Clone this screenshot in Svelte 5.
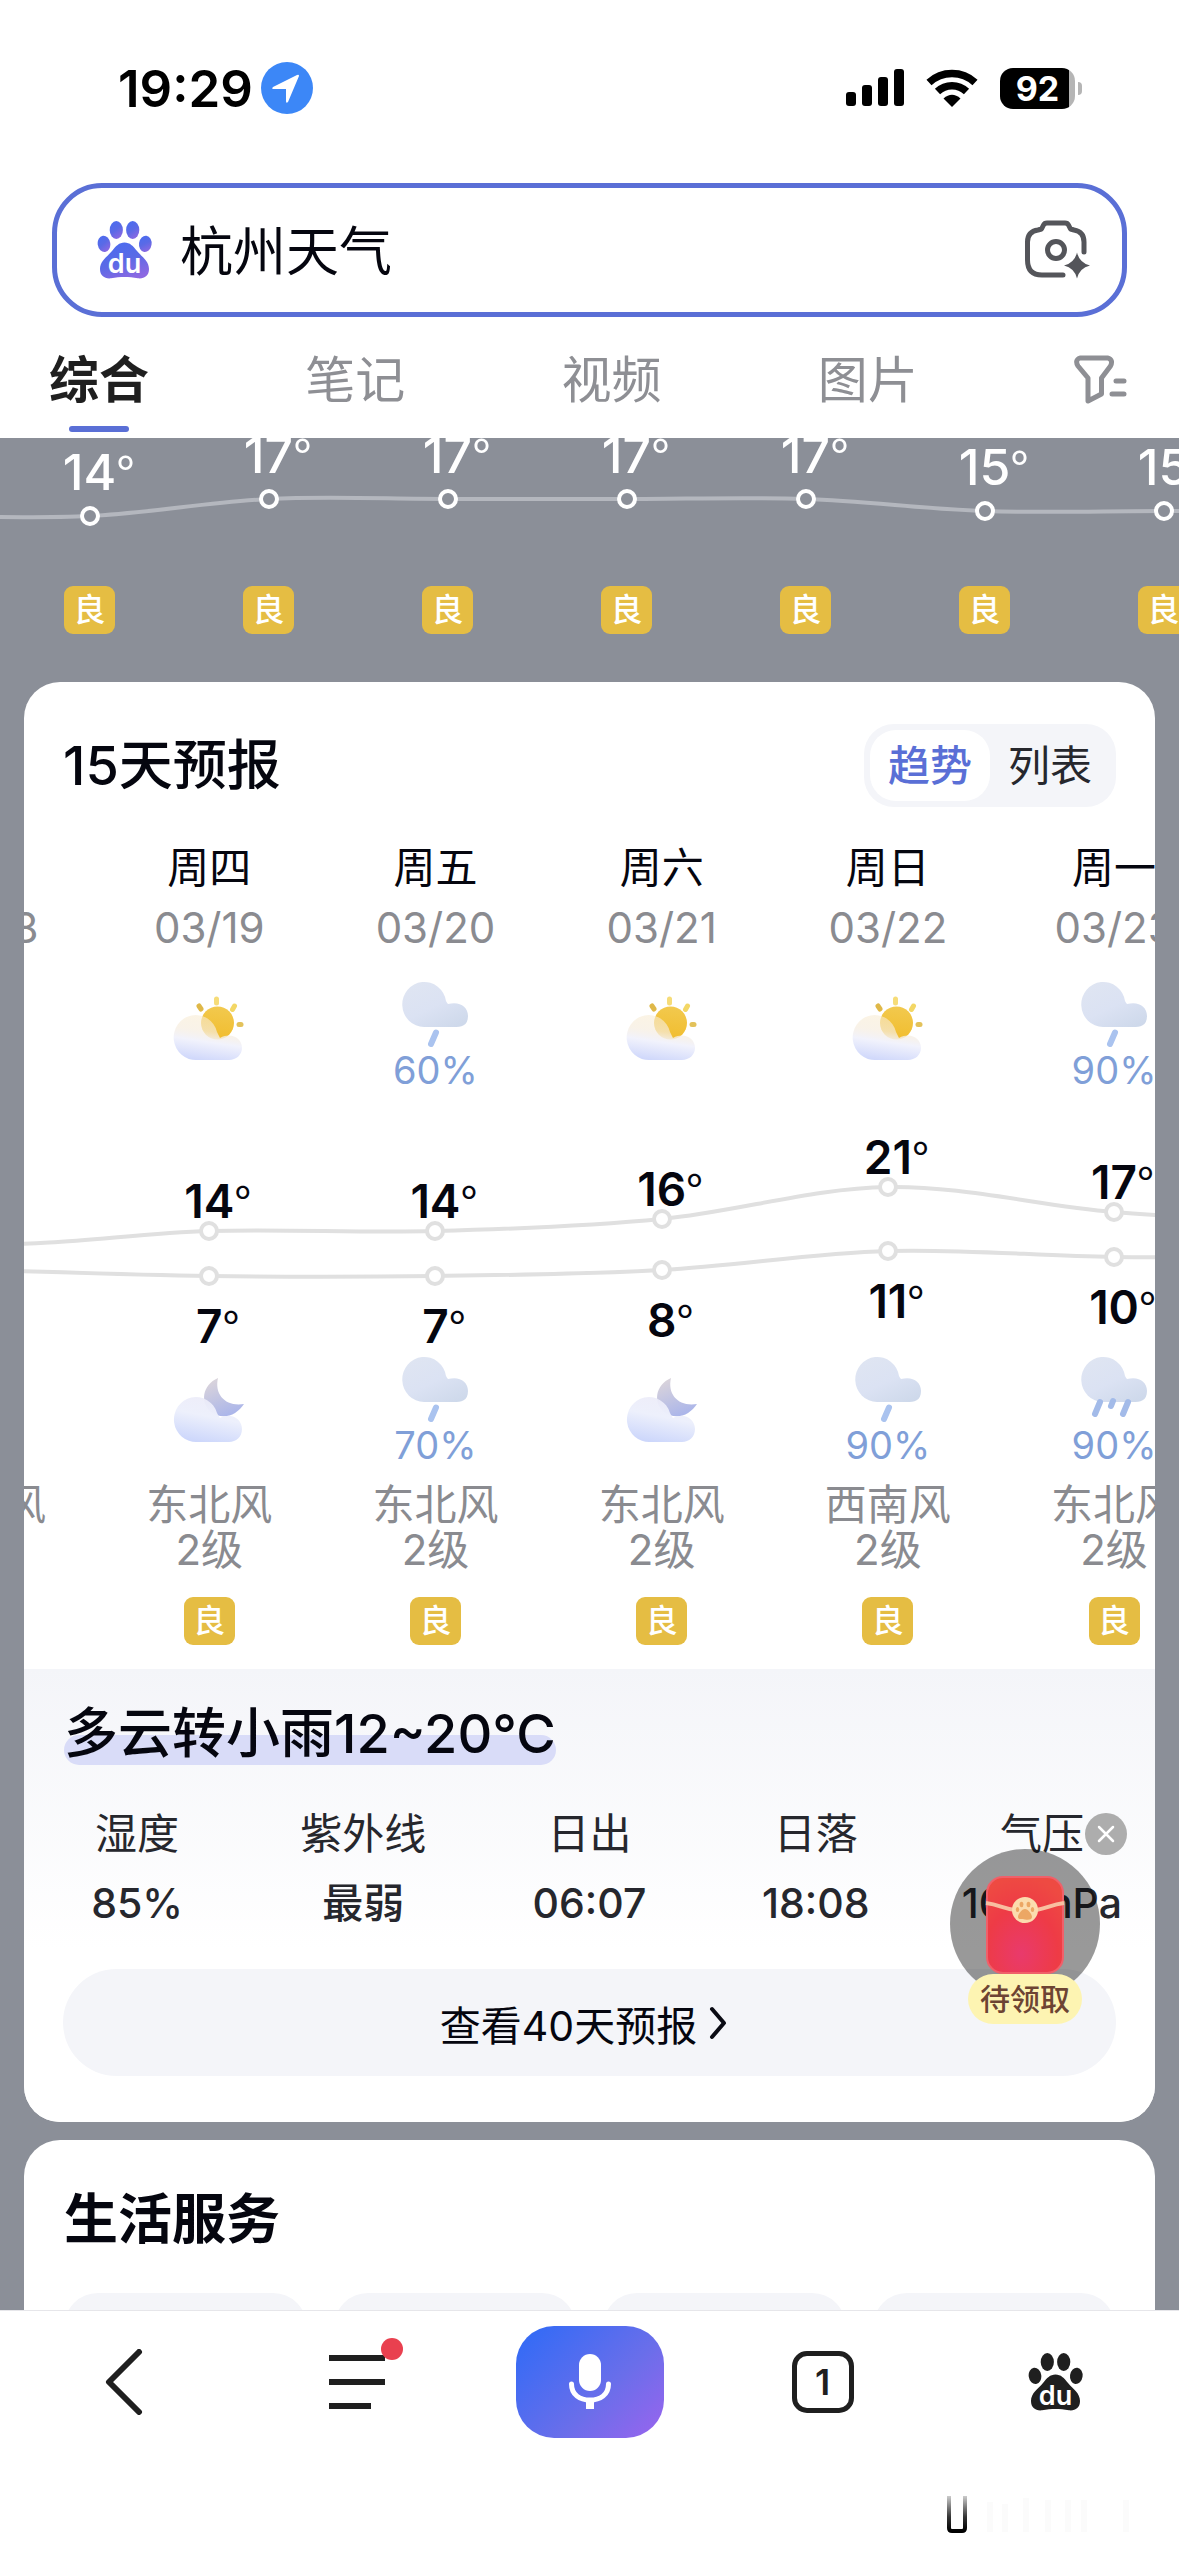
<script lang="ts">
  interface Weather {
    icon: 'cloudy' | 'night' | 'rain' | 'shower';
    chance?: number;
  }

  interface Day {
    week: string;
    date: string;
    day: Weather;
    night: Weather;
    high: number;
    low: number;
    wind: string;
    level: string;
    air: string;
  }

  const tabs = ['综合', '笔记', '视频', '图片'];
  let activeTab = $state('综合');
  let keyword = $state('杭州天气');
  let view = $state('趋势');
  let showGift = $state(true);

  const hours = [14, 17, 17, 17, 17, 15, 15];

  const days: Day[] = [
    { week: '周三', date: '03/18', day: { icon: 'cloudy' }, night: { icon: 'night' }, high: 12, low: 8, wind: '东北风', level: '2级', air: '良' },
    { week: '周四', date: '03/19', day: { icon: 'cloudy' }, night: { icon: 'night' }, high: 14, low: 7, wind: '东北风', level: '2级', air: '良' },
    { week: '周五', date: '03/20', day: { icon: 'rain', chance: 60 }, night: { icon: 'rain', chance: 70 }, high: 14, low: 7, wind: '东北风', level: '2级', air: '良' },
    { week: '周六', date: '03/21', day: { icon: 'cloudy' }, night: { icon: 'night' }, high: 16, low: 8, wind: '东北风', level: '2级', air: '良' },
    { week: '周日', date: '03/22', day: { icon: 'cloudy' }, night: { icon: 'rain', chance: 90 }, high: 21, low: 11, wind: '西南风', level: '2级', air: '良' },
    { week: '周一', date: '03/23', day: { icon: 'rain', chance: 90 }, night: { icon: 'shower', chance: 90 }, high: 17, low: 10, wind: '东北风', level: '2级', air: '良' }
  ];

  const stats = [
    { label: '湿度', value: '85%' },
    { label: '紫外线', value: '最弱' },
    { label: '日出', value: '06:07' },
    { label: '日落', value: '18:08' },
    { label: '气压', value: '1013hPa' }
  ];

  const hourY = (t: number) => Math.round(198 - t * 5.7);
  const dayY = (t: number) => Math.round(228.5 - t * 6.36);

  // Smooth curve through column centres; the first and last values sit outside the strip
  function curve(values: number[], toY: (t: number) => number): string {
    const pts = values.map((v, i) => [i * 100 - 50, toY(v)]);
    let d = `M${pts[0][0]} ${pts[0][1]}`;
    for (let i = 0; i < pts.length - 1; i++) {
      const p0 = pts[i - 1] ?? pts[i];
      const p1 = pts[i];
      const p2 = pts[i + 1];
      const p3 = pts[i + 2] ?? p2;
      d += ` C${p1[0] + (p2[0] - p0[0]) / 6} ${p1[1] + (p2[1] - p0[1]) / 6}`;
      d += ` ${p2[0] - (p3[0] - p1[0]) / 6} ${p2[1] - (p3[1] - p1[1]) / 6} ${p2[0]} ${p2[1]}`;
    }
    return d;
  }

  const hourLine = curve([14, ...hours, 15], hourY);
  const highLine = curve([16, ...days.map((d) => d.high), 15], dayY);
  const lowLine = curve([9, ...days.map((d) => d.low), 10], dayY);
</script>

{#snippet paw(fill: string, ink: string)}
  <svg viewBox="17 21 56 60" width="56" height="60" aria-hidden="true">
    <g {fill}>
      <ellipse cx="36.3" cy="31" rx="6.6" ry="8.9" />
      <ellipse cx="52.7" cy="31" rx="6.6" ry="8.9" />
      <ellipse cx="24" cy="44.8" rx="6.3" ry="8.2" transform="rotate(-8 24 44.8)" />
      <ellipse cx="65.3" cy="44.8" rx="6.3" ry="8.2" transform="rotate(8 65.3 44.8)" />
      <path d="M44.5 43.5C50 43.5 53 47 57 52C62 58 69 62 69 70C69 77 64 80 58 79.3C53 78.5 49 78 44.5 78C40 78 36 78.5 31 79.3C25 80 20 77 20 70C20 62 27 58 32 52C36 47 39 43.5 44.5 43.5Z" />
    </g>
    <text x="44.5" y="74" text-anchor="middle" font-size="27" font-weight="600" fill={ink}>du</text>
  </svg>
{/snippet}

{#snippet weather(w: Weather)}
  <div class="weather">
    {#if w.icon === 'cloudy'}
      <svg width="72" height="80" viewBox="0 0 72 80" aria-hidden="true">
        <g stroke="#f3d765" stroke-width="5" stroke-linecap="round">
          <path d="M43.5 17v4" stroke="#f6dc78" />
          <path d="M26 24l2 3" stroke="#dfb848" />
          <path d="M61.5 24l-2 3.5" />
          <path d="M66 42.5h2" stroke="#e3c25a" />
        </g>
        <circle cx="44.5" cy="41" r="16.500" fill="url(#sun)" />
        <path d="M24 78A22 22.500 0 1 1 44 50Q46 54 47 56C58 50 69 56 69 66C69 73 63 78 56 78Z" fill="url(#puff)" />
      </svg>
    {:else if w.icon === 'night'}
      <svg width="72" height="86" viewBox="0 0 72 86" aria-hidden="true">
        <path d="M45 21C29 28 27 46 38 55C50 64 64 58 71 47C53 50 41 38 45 21Z" fill="url(#moon)" />
        <path d="M24 85A22 22.500 0 1 1 44 56Q46 60 47 61C58 55 69 62 69 72C69 80 63 85 56 85Z" fill="url(#haze)" />
      </svg>
    {:else}
      <svg width="72" height="66" viewBox="0 0 72 66" aria-hidden="true">
        <path d="M25 45a22 22.500 0 1 1 22-26q1 2 2 3c11-3 20 2 20 12s-7 11-14 11z" fill="url(#rain)" />
        {#if w.icon === 'rain'}
          <path d="M37 50.500l-5 11.500" stroke="#aac3ef" stroke-width="6" stroke-linecap="round" />
        {:else}
          <path d="M22 45l-5 12M35 44l-2 5M50 45l-5 12" stroke="#a3bbe9" stroke-width="6" stroke-linecap="round" />
        {/if}
      </svg>
      <span class="chance">{w.chance}%</span>
    {/if}
  </div>
{/snippet}

<svg class="defs" width="0" height="0" aria-hidden="true">
  <defs>
    <linearGradient id="sun" x1="0.6" y1="0" x2="0.5" y2="1">
      <stop offset="0" stop-color="#f2c94e" />
      <stop offset="1" stop-color="#f1bd2e" />
    </linearGradient>
    <linearGradient id="puff" x1="0.6" y1="0.1" x2="0.4" y2="1">
      <stop offset="0" stop-color="#f8ecd4" stop-opacity="0.6" />
      <stop offset="0.3" stop-color="#f6eddf" stop-opacity="0.7" />
      <stop offset="0.55" stop-color="#f1f2fc" stop-opacity="0.97" />
      <stop offset="1" stop-color="#d0d8fb" />
    </linearGradient>
    <linearGradient id="haze" x1="0.7" y1="0" x2="0.4" y2="1">
      <stop offset="0" stop-color="#ecebf8" stop-opacity="0.9" />
      <stop offset="0.45" stop-color="#edf0fc" />
      <stop offset="1" stop-color="#cdd7fb" />
    </linearGradient>
    <linearGradient id="moon" x1="0.2" y1="0" x2="0.6" y2="1">
      <stop offset="0" stop-color="#dcd5da" />
      <stop offset="1" stop-color="#aab5ea" />
    </linearGradient>
    <linearGradient id="rain" x1="0.2" y1="0" x2="0.9" y2="1">
      <stop offset="0" stop-color="#dfe5f2" />
      <stop offset="0.5" stop-color="#dbe2f3" />
      <stop offset="1" stop-color="#cdd8ea" />
    </linearGradient>
    <linearGradient id="brand" x1="0.2" y1="0" x2="0.7" y2="1">
      <stop offset="0" stop-color="#4a6cf0" />
      <stop offset="0.5" stop-color="#5a6ae6" />
      <stop offset="1" stop-color="#8d68e2" />
    </linearGradient>
    <radialGradient id="packet" cx="0.45" cy="0.8" r="0.8">
      <stop offset="0" stop-color="#e93a6c" />
      <stop offset="0.6" stop-color="#ee3b46" />
      <stop offset="1" stop-color="#ee4a42" />
    </radialGradient>
    <linearGradient id="home" x1="0" y1="0" x2="0" y2="1">
      <stop offset="0" stop-color="#000" stop-opacity="0.2" />
      <stop offset="0.6" stop-color="#000" stop-opacity="0.8" />
      <stop offset="1" stop-color="#000" />
    </linearGradient>
  </defs>
</svg>

<div class="page">
  <header>
    <div class="status">
      <span class="time">19:29</span>
      <svg width="52" height="52" viewBox="0 0 52 52" aria-hidden="true">
        <circle cx="26" cy="26" r="26" fill="#3c87f7" />
        <path d="M38 14L27 40Q25 42 25 39V27H13Q10 27 12 25L36 13Q38 12 38 14Z" fill="#fff" />
      </svg>
      <div class="signals">
        <svg width="58" height="38" viewBox="0 0 58 38" aria-hidden="true">
          <rect x="0" y="23" width="10" height="14" rx="3" />
          <rect x="16" y="16" width="10" height="21" rx="3" />
          <rect x="32" y="8" width="10" height="29" rx="3" />
          <rect x="48" y="0" width="10" height="37" rx="3" />
        </svg>
        <svg width="52" height="38" viewBox="0 0 52 38" aria-hidden="true">
          <g fill="none" stroke="#000" stroke-width="7.5">
            <path d="M3 13.5A34 34 0 0 1 49 13.5" />
            <path d="M11.5 22.5A21 21 0 0 1 40.5 22.5" />
          </g>
          <path d="M26 38L17.5 29.500Q26 22 34.5 29.500Z" />
        </svg>
        <div class="battery"><span>92</span></div>
      </div>
    </div>

    <form class="search" onsubmit={(e) => e.preventDefault()}>
      {@render paw('url(#brand)', '#fff')}
      <input type="text" aria-label="搜索" bind:value={keyword} />
      <button type="button" class="plain" aria-label="拍照搜索">
        <svg width="66" height="60" viewBox="14 22 66 60" aria-hidden="true">
          <path d="M73 54V44C73 37 69 33 63 32L59.5 31L57.5 27Q56.5 25 54 25H36Q33.5 25 32.5 27L30.5 31L27 32C20 33 16.5 37 16.5 44V62C16.5 72 21 77 31 77H52" fill="none" stroke="#54555a" stroke-width="5" stroke-linecap="round" stroke-linejoin="round" />
          <circle cx="45" cy="52" r="8.5" fill="none" stroke="#54555a" stroke-width="5" />
          <path d="M66 54.5Q68.5 65 79 67.5Q68.5 70 66 80.5Q63.5 70 53 67.5Q63.5 65 66 54.5Z" fill="#54555a" />
        </svg>
      </button>
    </form>

    <nav class="tabs">
      {#each tabs as tab}
        <button type="button" class="plain" class:active={tab === activeTab} onclick={() => (activeTab = tab)}>
          {tab}
        </button>
      {/each}
      <button type="button" class="plain" aria-label="筛选">
        <svg width="53" height="60" viewBox="65 150 53 60" fill="none" stroke="#8e8f94" stroke-width="5" stroke-linecap="round" stroke-linejoin="round" aria-hidden="true">
          <path d="M71 158H99Q104.5 160 101.5 166L92.5 178V194L79 201V178L69 166Q65.5 160 71 158Z" />
          <path d="M107 181h8M103 194h12" />
        </svg>
      </button>
    </nav>
  </header>

  <main>
    <section class="hours">
      <svg class="line" viewBox="0 0 700 188" preserveAspectRatio="none" aria-hidden="true">
        <path d={hourLine} stroke="#b4b7be" />
      </svg>
      {#each hours as temp}
        <div class="hour">
          <div class="plot">
            <span class="temp" style:top="{hourY(temp) - 69}px">{temp}<i>°</i></span>
            <span class="dot" style:top="{hourY(temp) - 10}px"></span>
          </div>
          <span class="air">良</span>
        </div>
      {/each}
    </section>

    <section class="card forecast">
      <div class="head">
        <h2>15天预报</h2>
        <div class="toggle">
          {#each ['趋势', '列表'] as name}
            <button type="button" class="plain" class:active={name === view} onclick={() => (view = name)}>{name}</button>
          {/each}
        </div>
      </div>

      <div class="days">
        {#each days as d}
          <div class="day">
            <span class="week">{d.week}</span>
            <span class="date">{d.date}</span>
            {@render weather(d.day)}
            <div class="plot">
              <span class="temp" style:top="{dayY(d.high) - 55}px">{d.high}<i>°</i></span>
              <span class="dot" style:top="{dayY(d.high) - 10}px"></span>
              <span class="dot" style:top="{dayY(d.low) - 10}px"></span>
              <span class="temp" style:top="{dayY(d.low) + 25}px">{d.low}<i>°</i></span>
            </div>
            {@render weather(d.night)}
            <span class="wind">{d.wind}<br />{d.level}</span>
            <span class="air">{d.air}</span>
          </div>
        {/each}
        <svg class="line" viewBox="0 0 600 265" preserveAspectRatio="none" aria-hidden="true">
          <path d={highLine} stroke="#e0e0e0" />
          <path d={lowLine} stroke="#e0e0e0" />
        </svg>
      </div>

      <div class="detail">
        <h3><span>多云转小雨12~20℃</span></h3>
        <dl>
          {#each stats as s}
            <div>
              <dt>{s.label}</dt>
              <dd>{s.value}</dd>
            </div>
          {/each}
        </dl>
        <a class="more" href="#forecast40">
          查看40天预报
          <svg width="18" height="34" viewBox="0 0 18 34" aria-hidden="true">
            <path d="M3 3L15 17L3 31" fill="none" stroke="#0a0b14" stroke-width="4" stroke-linecap="round" stroke-linejoin="round" />
          </svg>
        </a>
        {#if showGift}
          <div class="gift">
            <button type="button" class="plain" aria-label="关闭" onclick={() => (showGift = false)}>
              <svg width="42" height="42" viewBox="0 0 42 42" aria-hidden="true">
                <circle cx="21" cy="21" r="21" fill="#adadad" />
                <path d="M14 14l14 14M28 14L14 28" stroke="#fff" stroke-width="2.5" stroke-linecap="round" />
              </svg>
            </button>
            <a class="packet" href="#gift">
              <svg width="150" height="150" viewBox="0 0 150 150" aria-hidden="true">
                <circle cx="75" cy="75" r="75" fill="#000" opacity="0.4" />
                <rect x="37" y="28" width="76" height="96" rx="16" fill="url(#packet)" stroke="#f0606a" stroke-width="2" />
                <path d="M36 54C52 56 56 62 75 62C94 62 98 56 114 54" fill="none" stroke="#f8bfa0" stroke-width="4" />
                <circle cx="75" cy="61" r="13" fill="#fbdcae" />
                <g fill="#eca764">
                  <ellipse cx="71.5" cy="55.5" rx="1.9" ry="2.8" />
                  <ellipse cx="78.5" cy="55.5" rx="1.9" ry="2.8" />
                  <ellipse cx="67.5" cy="60.5" rx="1.7" ry="2.5" />
                  <ellipse cx="82.5" cy="60.5" rx="1.7" ry="2.5" />
                  <path d="M75 60c3 0 7 5 7 8s-4 3-7 2.500s-7 0.500-7-2.500s4-8 7-8z" />
                </g>
              </svg>
              <span>待领取</span>
            </a>
          </div>
        {/if}
      </div>
    </section>

    <section class="card life">
      <h2>生活服务</h2>
      <div class="tiles">
        {#each [1, 2, 3, 4] as tile (tile)}
          <div class="tile"></div>
        {/each}
      </div>
    </section>
  </main>

  <footer>
    <button type="button" class="plain" aria-label="返回">
      <svg width="38" height="66" viewBox="0 0 38 66" aria-hidden="true">
        <path d="M34 3L4 33L34 63" fill="none" stroke="#1f1f1f" stroke-width="6" stroke-linecap="round" stroke-linejoin="round" />
      </svg>
    </button>
    <button type="button" class="plain menu" aria-label="菜单">
      <svg width="56" height="56" viewBox="0 0 56 56" aria-hidden="true">
        <path d="M0 4H56M0 28H56M0 52H42" stroke="#1f1f1f" stroke-width="6" />
      </svg>
      <span class="badge"></span>
    </button>
    <button type="button" class="plain mic" aria-label="语音">
      <svg width="44" height="56" viewBox="0 0 44 56" aria-hidden="true">
        <rect x="11" y="0" width="22" height="37" rx="11" fill="#fff" />
        <path d="M3.5 30C3.5 41 12 46 22 46S40.5 41 40.5 30" fill="none" stroke="#fff" stroke-width="5" stroke-linecap="round" />
        <path d="M22 46v9" stroke="#fff" stroke-width="8" />
      </svg>
    </button>
    <button type="button" class="plain" aria-label="窗口">
      <span class="windows">1</span>
    </button>
    <button type="button" class="plain" aria-label="首页">
      {@render paw('#1f1f1f', '#fff')}
    </button>
    <svg class="mark" width="280" height="40" viewBox="0 0 280 40" aria-hidden="true">
      <path d="M79 0V32Q79 35 82 35H92Q95 35 95 32V0" fill="none" stroke="url(#home)" stroke-width="4" />
      <path d="M120 6v30M135 8v28M156 2v34M178 4v32M198 4v32M214 4v32M256 4v32" stroke="#fbfbfb" stroke-width="6" />
    </svg>
  </footer>
</div>

<style>
  :global(body) {
    margin: 0;
    background: #fff;
  }

  .page {
    display: flex;
    flex-direction: column;
    height: 100vh;
    overflow: hidden;
    font-family: Inter, 'Noto Sans CJK SC', sans-serif;
    color: #05060f;
  }

  .defs {
    position: absolute;
  }

  svg {
    display: block;
    flex: none;
  }

  .plain {
    padding: 0;
    border: 0;
    background: none;
    font: inherit;
    color: inherit;
  }

  h2,
  h3,
  dl,
  dd {
    margin: 0;
  }

  /* status bar */
  .status {
    display: flex;
    align-items: center;
    gap: 8px;
    height: 56px;
    padding: 60px 97px 67px 118px;
  }

  .time {
    font-size: 51px;
    font-weight: 600;
    color: #000;
  }

  .signals {
    display: flex;
    align-items: center;
    gap: 22px;
    margin-left: auto;
  }

  .battery {
    position: relative;
    width: 75px;
    height: 41px;
    margin-right: 7px;
    border-radius: 13px;
    background: linear-gradient(to right, #000 92%, #b5b5b5 92%);
    color: #fff;
    font-size: 34px;
    font-weight: 700;
    line-height: 41px;
    text-align: center;
  }

  .battery::after {
    content: '';
    position: absolute;
    top: 14px;
    right: -7px;
    width: 4px;
    height: 13px;
    border-radius: 0 6px 6px 0;
    background: #b5b5b5;
  }

  /* search box */
  .search {
    display: flex;
    align-items: center;
    height: 124px;
    margin: 0 52px;
    padding: 0 31px 0 40px;
    border: 5px solid #5a6fd6;
    border-radius: 50px;
  }

  .search input {
    flex: 1;
    min-width: 0;
    margin: 0 27px;
    padding: 0 0 4px;
    border: 0;
    outline: 0;
    background: none;
    font: inherit;
    font-size: 53px;
    color: inherit;
  }

  /* tabs */
  .tabs {
    display: flex;
    justify-content: space-between;
    align-items: flex-start;
    padding: 33px 45px 6px 49px;
    color: #8e8f94;
    font-size: 50px;
    line-height: 60px;
  }

  .tabs .plain::after {
    content: '';
    display: block;
    width: 60px;
    height: 6px;
    margin: 16px auto 0;
    border-radius: 3px;
  }

  .tabs .active {
    color: #1f1f1f;
    font-weight: 700;
  }

  .tabs .active::after {
    background: #5a6fd6;
  }

  main {
    position: relative;
    flex: 1;
    min-height: 0;
    overflow: hidden;
    background: #8b8f98;
  }

  /* shared chart parts */
  .line {
    position: absolute;
    left: 0;
    width: 100%;
    fill: none;
  }

  .line path {
    stroke-width: 4px;
    vector-effect: non-scaling-stroke;
  }

  .plot {
    position: relative;
    z-index: 1;
    display: flex;
    justify-content: center;
    width: 100%;
  }

  .temp {
    position: absolute;
    line-height: 50px;
  }

  .temp i {
    position: absolute;
    left: 100%;
    font-family: 'Noto Sans CJK SC', sans-serif;
    font-style: normal;
    font-weight: 400;
  }

  .dot {
    position: absolute;
    box-sizing: border-box;
    width: 20px;
    height: 20px;
    border: 4px solid #e0e0e0;
    border-radius: 50%;
    background: #fff;
  }

  .air {
    width: 51px;
    height: 48px;
    border-radius: 9px;
    background: #e5bd43;
    color: #fff;
    font-size: 32px;
    font-weight: 500;
    line-height: 48px;
    text-align: center;
  }

  /* hourly strip, scrolled partly under the tabs */
  .hours {
    position: relative;
    display: flex;
    width: 1253px;
    margin-top: -40px;
    padding-bottom: 48px;
  }

  .hours .line {
    top: 0;
    height: 188px;
  }

  .hour {
    flex: 1;
    display: flex;
    flex-direction: column;
    align-items: center;
  }

  .hour .plot {
    height: 188px;
    color: #fff;
    font-size: 50px;
    font-weight: 500;
  }

  .hour .dot {
    border-color: #fff;
    background: #8b8f98;
  }

  .card {
    margin: 0 24px 18px;
    border-radius: 36px;
    background: #fff;
    overflow: hidden;
  }

  .card h2,
  .card h3 {
    font-size: 54px;
    font-weight: 500;
    line-height: 64px;
  }

  .head {
    display: flex;
    align-items: center;
    justify-content: space-between;
    padding: 42px 39px 36px;
  }

  .toggle {
    display: flex;
    padding: 6px;
    border-radius: 30px;
    background: #f4f5f9;
    color: #26272d;
    font-size: 42px;
    line-height: 71px;
  }

  .toggle .plain {
    width: 120px;
    border-radius: 26px;
  }

  .toggle .active {
    background: #fff;
    color: #5a6fd6;
    font-weight: 500;
  }

  /* daily trend, swiped by about two thirds of a column */
  .days {
    position: relative;
    display: grid;
    grid-template-columns: repeat(6, 20%);
    margin-left: -154px;
    margin-right: 154px;
    padding-bottom: 24px;
  }

  .days .line {
    top: 249px;
    width: 120%;
    height: 265px;
  }

  .day {
    display: flex;
    flex-direction: column;
    align-items: center;
    font-size: 42px;
    line-height: 50px;
    white-space: nowrap;
  }

  .date {
    margin: 10px 0 29px;
    color: #8a8b90;
  }

  .weather {
    height: 110px;
    display: flex;
    flex-direction: column;
    align-items: center;
  }

  .chance {
    color: #809fd8;
    font-size: 38px;
    line-height: 44px;
  }

  .day .plot {
    height: 265px;
    font-size: 46px;
    font-weight: 600;
  }

  .wind {
    margin: 15px 0 25px;
    color: #8a8b90;
    line-height: 45px;
    text-align: center;
  }

  /* selected day */
  .detail {
    position: relative;
    padding: 33px 0 46px;
    background: linear-gradient(#f4f5f9, #fff 280px);
  }

  .detail h3 {
    padding: 0 40px;
  }

  .detail h3 span {
    position: relative;
    z-index: 0;
    display: inline-block;
  }

  .detail h3 span::before {
    content: '';
    position: absolute;
    z-index: -1;
    inset: 33px 0 1px;
    border-radius: 15px;
    background: #d9dcf8;
  }

  dl {
    display: grid;
    grid-template-columns: repeat(5, 1fr);
    margin-top: 43px;
    color: #26272d;
    font-size: 42px;
    line-height: 50px;
    text-align: center;
  }

  dd {
    margin-top: 19px;
    font-size: 41px;
    font-weight: 500;
  }

  .more {
    display: flex;
    align-items: center;
    justify-content: center;
    gap: 12px;
    height: 107px;
    margin: 41px 39px 0;
    padding-right: 12px;
    border-radius: 54px;
    background: #f4f5f9;
    color: inherit;
    font-size: 41px;
    text-decoration: none;
  }

  /* floating red packet */
  .gift {
    position: absolute;
    top: 144px;
    right: 28px;
    display: flex;
    flex-direction: column;
    align-items: flex-end;
    width: 177px;
  }

  .packet {
    display: flex;
    flex-direction: column;
    align-items: center;
    align-self: flex-start;
    margin-top: -6px;
    text-decoration: none;
  }

  .packet span {
    position: relative;
    margin-top: -25px;
    padding: 0 12px;
    border-radius: 25px;
    background: #fdf4b2;
    color: #6d4433;
    font-size: 30px;
    font-weight: 500;
    line-height: 50px;
  }

  .life {
    padding: 48px 40px 0;
  }

  .card.life h2 {
    font-weight: 700;
  }

  .tiles {
    display: grid;
    grid-template-columns: repeat(4, 1fr);
    gap: 27px;
    margin-top: 41px;
  }

  .tile {
    height: 200px;
    border-radius: 34px;
    background: #f4f5f9;
  }

  /* bottom bar */
  footer {
    position: relative;
    display: grid;
    grid-template-columns: repeat(5, 1fr);
    justify-items: center;
    padding: 15px 7px 118px;
    border-top: 1px solid #e6e6ea;
    background: #fff;
  }

  footer .plain {
    display: flex;
    align-items: center;
    justify-content: center;
    height: 112px;
  }

  .menu {
    position: relative;
  }

  .badge {
    position: absolute;
    top: 12px;
    right: -18px;
    width: 22px;
    height: 22px;
    border-radius: 50%;
    background: #e9404f;
  }

  footer .mic {
    width: 148px;
    border-radius: 38px;
    background: linear-gradient(135deg, #376bf5 10%, #6a6eea 60%, #9a64ee);
  }

  .windows {
    box-sizing: border-box;
    width: 62px;
    height: 62px;
    border: 5px solid #1f1f1f;
    border-radius: 15px;
    color: #1f1f1f;
    font-size: 36px;
    font-weight: 600;
    line-height: 52px;
    text-align: center;
  }

  .mark {
    position: absolute;
    right: 29px;
    bottom: 20px;
  }
</style>
